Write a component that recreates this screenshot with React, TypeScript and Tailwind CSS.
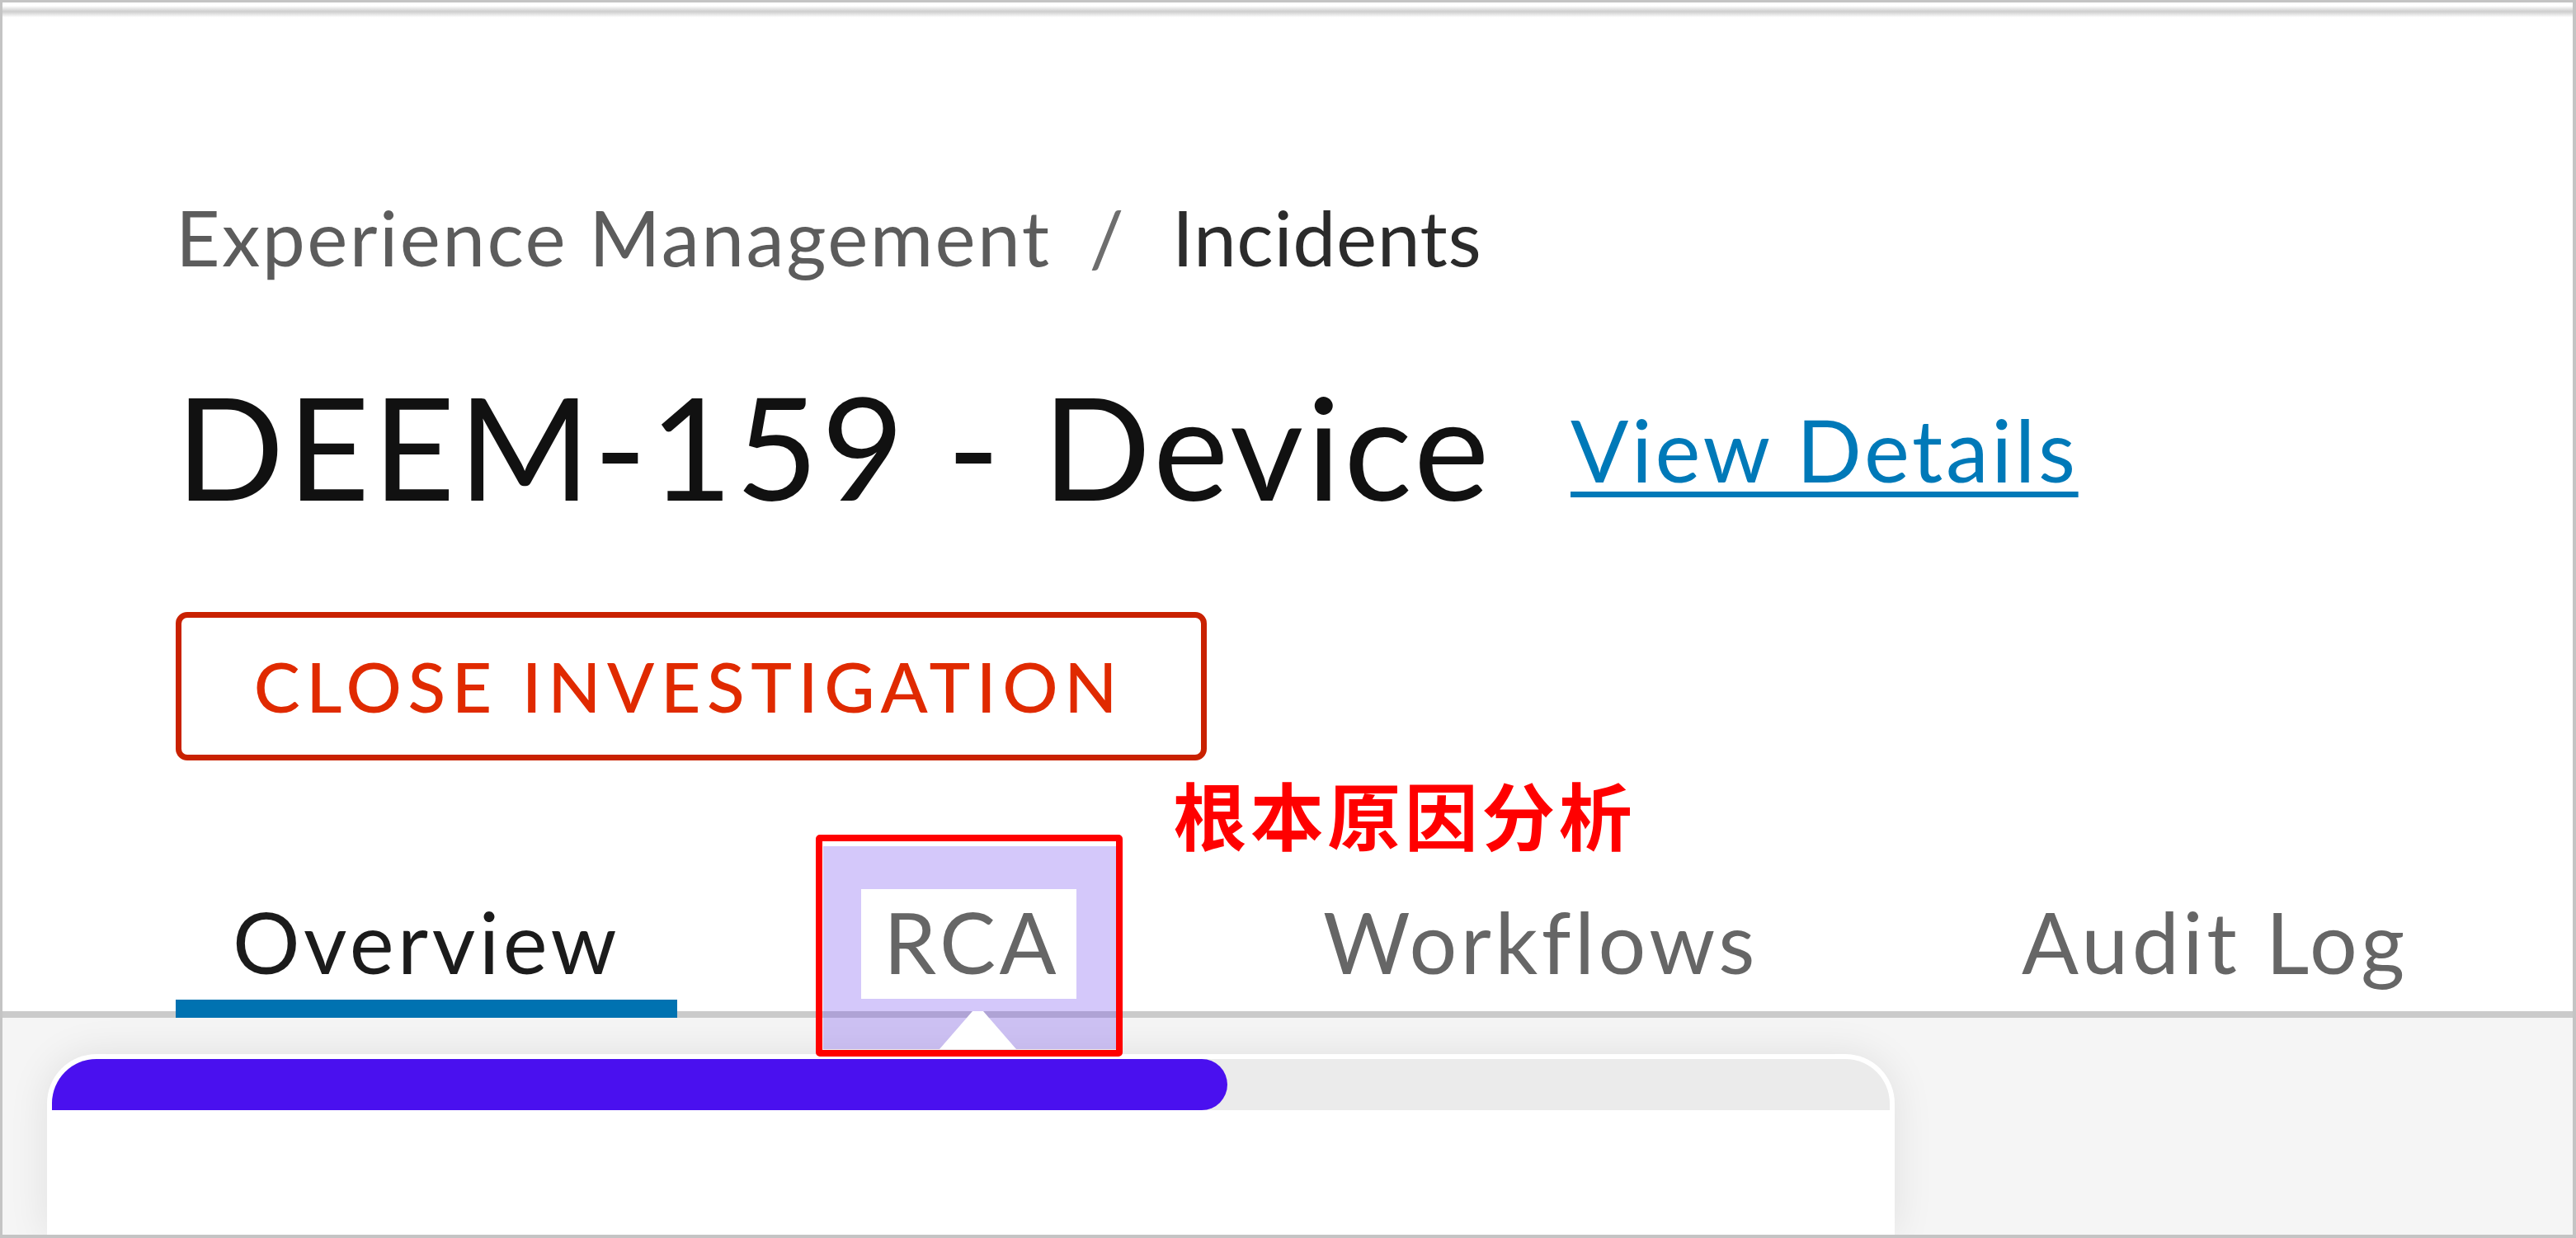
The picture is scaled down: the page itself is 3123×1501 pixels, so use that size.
const tabs = ["Overview", "RCA", "Workflows", "Audit Log"];

function RcaCallout() {
  // Annotation drawn over the RCA tab: purple highlight, red frame and caption
  return (
    <>
      <div className="pointer-events-none absolute left-[-4px] top-[-65px] h-[246px] w-[355px] bg-[rgba(112,72,238,0.3)]" />
      <div className="pointer-events-none absolute left-[42px] top-[-13px] h-[133px] w-[261px] bg-white" />
      <svg
        className="pointer-events-none absolute left-[137px] top-[135px] z-20"
        width="93"
        height="46"
        viewBox="0 0 93 46"
      >
        <polygon points="40,0 53,0 93,46 0,46" fill="#ffffff" />
      </svg>
      <div className="pointer-events-none absolute left-[-13px] top-[-79px] z-30 h-[269px] w-[372px] rounded-[5px] border-[8px] border-[#ff0000]" />
      <div className="pointer-events-none absolute left-[420px] top-[-150px] z-30 whitespace-nowrap font-['Noto_Sans_CJK_SC',sans-serif] text-[89px] font-bold leading-none text-[#ff0000]">
        根本原因分析
      </div>
    </>
  );
}

export default function App() {
  return (
    <div className="flex h-[1501px] w-[3123px] flex-col overflow-hidden border-[3px] border-r-[4px] border-b-[4px] border-[#c4c4c4] bg-white font-['Lato',sans-serif]">
      {/* top shadow line */}
      <div className="mt-[4px] h-[14px] shrink-0 bg-linear-to-b from-white via-[#cdcdcd] to-white" />

      {/* Header */}
      <div className="shrink-0 pl-[210px]">
        <nav className="mt-[220px] flex items-center text-[93px] leading-none tracking-[2.4px]">
          <span className="text-[#5c5c5c]">Experience Management</span>
          <span className="ml-[46px] text-[#6e6e6e]">/</span>
          <span className="ml-[56px] tracking-[0.6px] text-[#2b2b2b]">Incidents</span>
        </nav>

        <div className="mt-[120px] flex items-center">
          <h1 className="text-[173px] font-normal leading-none tracking-[3.7px] text-[#111111]">
            DEEM-159 - Device
          </h1>
          <a
            href="#"
            className="ml-[95px] mt-[9px] text-[104px] leading-none tracking-[3.6px] text-[#0079b8] underline decoration-[7px] underline-offset-[11px]"
          >
            View Details
          </a>
        </div>

        <button className="mt-[115px] flex h-[180px] w-[1250px] items-center justify-center rounded-[14px] border-[7px] border-[#c92100] bg-white pr-[6px] text-[84px] font-medium leading-none tracking-[7.6px] text-[#e02a00]">
          CLOSE INVESTIGATION
        </button>
      </div>

      {/* Tabs */}
      <div className="mt-[169px] flex shrink-0 gap-[181px] border-b-[8px] border-[#cbcbcb] pl-[210px]">
        {tabs.map((t, i) => (
          <div
            key={t}
            className={`relative -mb-[8px] border-b-[22px] px-[69px] pb-[19px] text-[102px] leading-none tracking-[4.5px] ${
              i === 0 ? "border-[#0072b1] text-[#1b1b1b]" : "border-transparent text-[#666666]"
            }`}
          >
            {t === "RCA" && <RcaCallout />}
            <span className="relative z-10">{t}</span>
          </div>
        ))}
      </div>

      {/* Content area */}
      <div className="flex-1 bg-[#f5f5f5] pl-[54px] pt-[44px]">
        <div className="h-full w-[2240px] rounded-t-[60px] bg-white px-[6px] pt-[6px] shadow-[0_0_50px_rgba(0,0,0,0.09)]">
          <div className="h-[62px] overflow-hidden rounded-t-[54px] bg-[#ebebeb]">
            <div className="h-full w-[1425px] rounded-r-full bg-[#4a10ef]" />
          </div>
        </div>
      </div>
    </div>
  );
}
